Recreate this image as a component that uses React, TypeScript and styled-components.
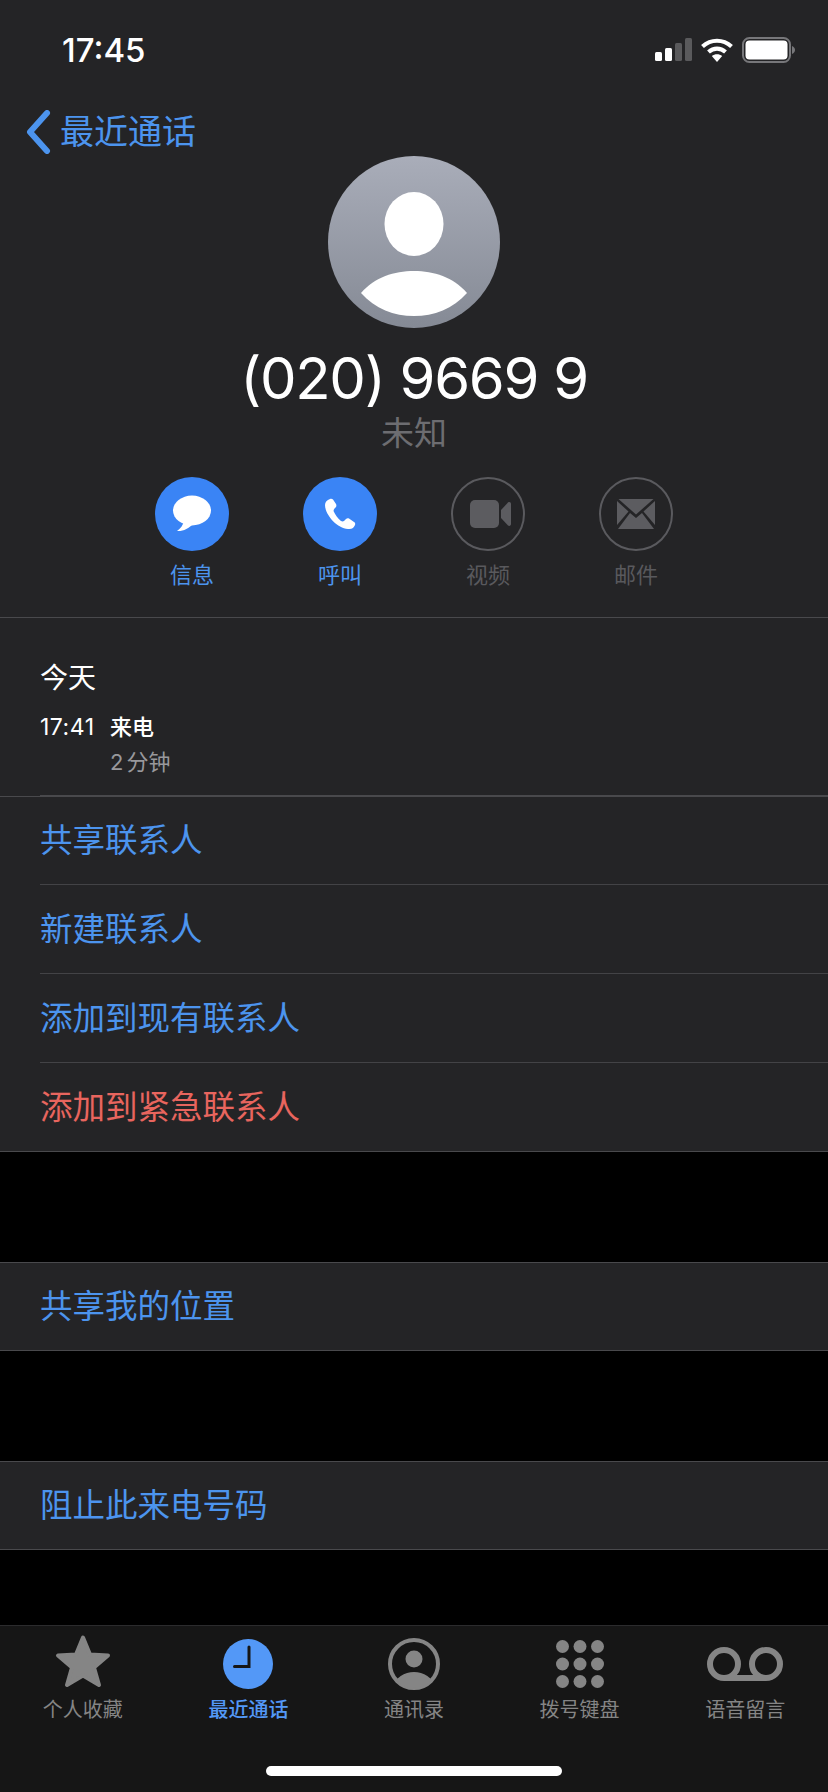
import styled, { createGlobalStyle } from 'styled-components';

const GlobalStyle = createGlobalStyle`
  html, body {
    margin: 0;
    padding: 0;
    background: #000;
  }
  * {
    box-sizing: border-box;
  }
`;

const BLUE = '#4c94ee';
const FONT = 'Inter, "Noto Sans CJK SC", sans-serif';

const Page = styled.div`
  width: 828px;
  height: 1792px;
  display: flex;
  flex-direction: column;
  background: #000;
  font-family: ${FONT};
  overflow: hidden;
`;

const Header = styled.header`
  height: 617px;
  background: #242426;
  display: flex;
  flex-direction: column;
`;

const StatusBar = styled.div`
  height: 100px;
  padding: 28px 33px 0 62px;
  display: flex;
  justify-content: space-between;
  align-items: flex-start;
`;

const Time = styled.span`
  font-size: 33px;
  line-height: 44px;
  font-weight: 500;
  color: #fff;
`;

const StatusIcons = styled.div`
  display: flex;
  align-items: center;
  gap: 9px;
  height: 44px;
`;

const Nav = styled.div`
  height: 56px;
  padding: 8px 0 0 26px;
  display: flex;
  align-items: center;
  gap: 9px;
`;

const NavTitle = styled.span`
  font-size: 34px;
  line-height: 50px;
  color: ${BLUE};
`;

const Avatar = styled.div`
  width: 172px;
  height: 172px;
  margin: 0 auto;
  border-radius: 50%;
  overflow: hidden;
  background: linear-gradient(#a9adb9, #858a95);
`;

const Name = styled.h1`
  margin: 15px 0 0;
  height: 70px;
  font-size: 58px;
  line-height: 70px;
  font-weight: 400;
  letter-spacing: -1.3px;
  text-align: center;
  color: #fff;
`;

const Sub = styled.div`
  height: 40px;
  font-size: 33px;
  line-height: 40px;
  text-align: center;
  color: #6d6d71;
`;

const Actions = styled.div`
  margin-top: 24px;
  display: flex;
  justify-content: center;
`;

const Action = styled.div`
  width: 148px;
  display: flex;
  flex-direction: column;
  align-items: center;
  gap: 9px;
`;

const ActionCircle = styled.div<{ $on: boolean }>`
  width: 74px;
  height: 74px;
  border-radius: 50%;
  display: flex;
  align-items: center;
  justify-content: center;
  background: ${(p) => (p.$on ? '#3a84f5' : 'transparent')};
  border: ${(p) => (p.$on ? 'none' : '2px solid #5a5a5e')};
`;

const ActionLabel = styled.span<{ $on: boolean }>`
  font-size: 22px;
  line-height: 30px;
  color: ${(p) => (p.$on ? BLUE : '#59595d')};
`;

const Group = styled.section`
  background: #242426;
  border-top: 1px solid #49494c;
  border-bottom: 1px solid #49494c;
`;

const History = styled.div`
  height: 177px;
  padding: 40px 0 0 40px;
`;

const Day = styled.div`
  font-size: 28px;
  line-height: 40px;
  color: #fff;
`;

const Call = styled.div`
  margin-top: 12px;
  display: grid;
  grid-template-columns: 70px 1fr;
  font-size: 22px;
  line-height: 35px;
  color: #fff;
`;

const CallTime = styled.span`
  font-size: 23px;
  letter-spacing: 0.5px;
`;

const CallType = styled.span`
  font-weight: 500;
`;

const Duration = styled.div`
  grid-column: 2;
  color: #98989c;
  word-spacing: -3px;
`;

const InsetLine = styled.div`
  height: 1px;
  margin-left: 40px;
  background: #49494c;
`;

const List = styled.div`
  border-top: 1px solid #49494c;
`;

const Row = styled.div`
  height: 87px;
  margin-left: 40px;
  padding-bottom: 6px;
  display: flex;
  align-items: center;
  font-size: 32.5px;
  color: ${BLUE};

  & + & {
    height: 89px;
    padding-bottom: 5px;
    border-top: 1px solid #434346;
  }
`;

const DangerRow = styled(Row)`
  color: #e8655e;
`;

const Spacer = styled.div`
  height: 110px;
`;

const TabBar = styled.nav`
  margin-top: auto;
  height: 167px;
  background: #161616;
  border-top: 1px solid #2b2b2d;
  position: relative;
  display: grid;
  grid-template-columns: repeat(5, 1fr);
  align-items: start;
`;

const Tab = styled.div<{ $on?: boolean }>`
  display: flex;
  flex-direction: column;
  align-items: center;
  font-size: 20px;
  line-height: 30px;
  font-weight: ${(p) => (p.$on ? 500 : 400)};
  color: ${(p) => (p.$on ? '#5398f7' : '#858585')};
`;

const TabIcon = styled.div`
  height: 69px;
  padding-top: 6px;
  display: flex;
  align-items: center;
  justify-content: center;
`;

const HomeBar = styled.div`
  position: absolute;
  left: 266px;
  bottom: 16px;
  width: 296px;
  height: 10px;
  border-radius: 5px;
  background: #fff;
`;

const VideoSvg = styled.svg`
  margin-left: 5px;
`;

const Signal = () => (
  <svg width="37" height="24" viewBox="0 0 37 24">
    <rect x="0" y="14" width="7" height="9" rx="1.5" fill="#fff" />
    <rect x="10" y="10" width="7" height="13" rx="1.5" fill="#fff" />
    <rect x="20" y="5" width="7" height="18" rx="1.5" fill="#5a5a5c" />
    <rect x="30" y="0" width="7" height="23" rx="1.5" fill="#5a5a5c" />
  </svg>
);

const Wifi = () => (
  <svg width="32" height="24" viewBox="0 0 32 24" fill="none" stroke="#fff" strokeWidth="4.2">
    <path d="M1.5 8.5 C10 0.8 22 0.8 30.5 8.5" />
    <path d="M7.5 14 C12.5 9.6 19.5 9.6 24.5 14" />
    <path d="M16 24 L10.8 18 C13.8 15.6 18.2 15.6 21.2 18 Z" fill="#fff" stroke="none" />
  </svg>
);

const Battery = () => (
  <svg width="53" height="26" viewBox="0 0 53 26">
    <rect x="1" y="1" width="47" height="24" rx="6.5" fill="none" stroke="#77777a" strokeWidth="2" />
    <rect x="3.5" y="3.5" width="42" height="19" rx="4" fill="#fff" />
    <path d="M50 9 C52 9.8 53 11.5 53 13 C53 14.5 52 16.2 50 17 Z" fill="#77777a" />
  </svg>
);

const Chevron = () => (
  <svg width="25" height="44" viewBox="0 0 25 44" fill="none">
    <polyline points="21,3 4,22 21,41" stroke={BLUE} strokeWidth="6" strokeLinecap="round" strokeLinejoin="round" />
  </svg>
);

const Person = () => (
  <svg width="172" height="172" viewBox="0 0 172 172">
    <ellipse cx="86" cy="68" rx="29.5" ry="32" fill="#fff" />
    <path d="M33 137 C47 121 66 115 86 115 C106 115 125 121 139 137 C125 153 106 160 86 160 C66 160 47 153 33 137 Z" fill="#fff" />
  </svg>
);

const Bubble = () => (
  <svg width="40" height="38" viewBox="0 0 40 38">
    <ellipse cx="20" cy="15.5" rx="19" ry="15" fill="#fff" />
    <path d="M12 26 C11 30 9 33 5 36 C11 36.5 17 33.5 21 29 Z" fill="#fff" />
  </svg>
);

const Phone = () => (
  <svg width="32" height="32" viewBox="0 0 32 32">
    <path
      d="M6 1 C3 2 1 4 1 7 C1 16 12 30 24 31 C28 31.5 30 29.5 31 27 C31.5 25.5 31 24.5 30 24 L25 20.5 C24 20 23 20 22 21 L20 23 C19 23.7 18 23.5 17 23 C13.5 20 11 16.5 9.5 13 C9.5 12 10 11 11 10 L12 9 C12.5 8 12.5 7 12 6 L9 1.5 C8.2 0.8 7 0.6 6 1 Z"
      fill="#fff"
    />
  </svg>
);

const Video = () => (
  <VideoSvg width="41" height="28" viewBox="0 0 41 28" fill="#5c5c60">
    <rect x="0" y="0" width="29" height="28" rx="5" />
    <path d="M31 10 L38 2.5 C39.5 1.5 41 2.5 41 4 V24 C41 25.5 39.5 26.5 38 25.5 L31 18 Z" />
  </VideoSvg>
);

const Mail = () => (
  <svg width="38" height="30" viewBox="0 0 38 30" fill="#5c5c60">
    <path d="M1.5 0 H36.5 L19 15.5 Z" />
    <path d="M0 2 L11.5 12.5 L0 26 Z" />
    <path d="M38 2 L26.5 12.5 L38 26 Z" />
    <path d="M13 14 L19 19 L25 14 L37 30 H1 Z" />
  </svg>
);

const Star = () => (
  <svg width="56" height="60" viewBox="0 0 56 60">
    <path
      d="M28 3.5 L35 20.5 L53 21.5 L39 33.5 L44 51 L28 41.5 L12 51 L17 33.5 L3 21.5 L21 20.5 Z"
      fill="#858585"
      stroke="#858585"
      strokeWidth="4"
      strokeLinejoin="round"
    />
  </svg>
);

const Clock = () => (
  <svg width="50" height="50" viewBox="0 0 50 50">
    <circle cx="25" cy="25" r="25" fill="#5398f7" />
    <path d="M26 8 V27.5 H11.5" fill="none" stroke="#161616" strokeWidth="3" strokeLinecap="round" />
  </svg>
);

const Contact = () => (
  <svg width="52" height="52" viewBox="0 0 52 52">
    <defs>
      <clipPath id="contact-clip">
        <circle cx="26" cy="26" r="24" />
      </clipPath>
    </defs>
    <circle cx="26" cy="26" r="24" fill="none" stroke="#858585" strokeWidth="4" />
    <circle cx="26" cy="21" r="8.5" fill="#858585" />
    <path d="M4 52 C6 40 16 34 26 34 C36 34 46 40 48 52 Z" fill="#858585" clipPath="url(#contact-clip)" />
  </svg>
);

const Keypad = () => (
  <svg width="48" height="48" viewBox="0 0 48 48" fill="#858585">
    {[6.5, 24, 41.5].map((y) =>
      [6.5, 24, 41.5].map((x) => <circle key={`${x}-${y}`} cx={x} cy={y} r="6.5" />),
    )}
  </svg>
);

const Voicemail = () => (
  <svg width="76" height="34" viewBox="0 0 76 34" fill="none" stroke="#858585" strokeWidth="6">
    <circle cx="17" cy="17" r="14" />
    <circle cx="59" cy="17" r="14" />
    <line x1="17" y1="31" x2="59" y2="31" />
  </svg>
);

const ACTIONS = [
  { label: '信息', on: true, icon: <Bubble /> },
  { label: '呼叫', on: true, icon: <Phone /> },
  { label: '视频', on: false, icon: <Video /> },
  { label: '邮件', on: false, icon: <Mail /> },
];

const TABS = [
  { label: '个人收藏', icon: <Star /> },
  { label: '最近通话', icon: <Clock />, on: true },
  { label: '通讯录', icon: <Contact /> },
  { label: '拨号键盘', icon: <Keypad /> },
  { label: '语音留言', icon: <Voicemail /> },
];

const App = () => (
  <Page>
    <GlobalStyle />
    <Header>
      <StatusBar>
        <Time>17:45</Time>
        <StatusIcons>
          <Signal />
          <Wifi />
          <Battery />
        </StatusIcons>
      </StatusBar>
      <Nav>
        <Chevron />
        <NavTitle>最近通话</NavTitle>
      </Nav>
      <Avatar>
        <Person />
      </Avatar>
      <Name>(020) 9669 9</Name>
      <Sub>未知</Sub>
      <Actions>
        {ACTIONS.map((a) => (
          <Action key={a.label}>
            <ActionCircle $on={a.on}>{a.icon}</ActionCircle>
            <ActionLabel $on={a.on}>{a.label}</ActionLabel>
          </Action>
        ))}
      </Actions>
    </Header>
    <Group>
      <History>
        <Day>今天</Day>
        <Call>
          <CallTime>17:41</CallTime>
          <CallType>来电</CallType>
          <Duration>2 分钟</Duration>
        </Call>
      </History>
      <InsetLine />
      <List>
        <Row>共享联系人</Row>
        <Row>新建联系人</Row>
        <Row>添加到现有联系人</Row>
        <DangerRow>添加到紧急联系人</DangerRow>
      </List>
    </Group>
    <Spacer />
    <Group>
      <Row>共享我的位置</Row>
    </Group>
    <Spacer />
    <Group>
      <Row>阻止此来电号码</Row>
    </Group>
    <TabBar>
      {TABS.map((t) => (
        <Tab key={t.label} $on={t.on}>
          <TabIcon>{t.icon}</TabIcon>
          {t.label}
        </Tab>
      ))}
      <HomeBar />
    </TabBar>
  </Page>
);

export default App;
